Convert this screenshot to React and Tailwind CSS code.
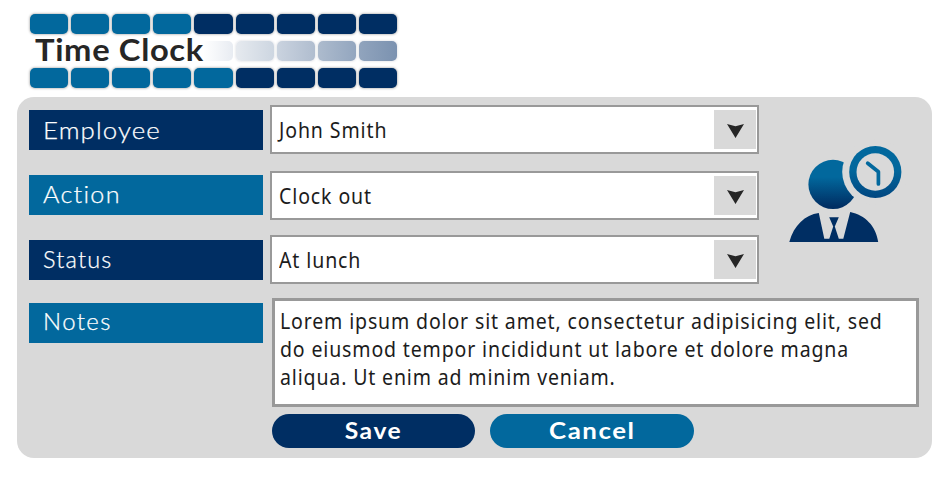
import React from "react";

const TEAL = "bg-[#02689d]";
const NAVY = "bg-[#002e63]";

function TileRow({ tiles }) {
  return (
    <div className="flex h-[20px] gap-[3px]">
      {tiles.map((tone, i) => (
        <div
          key={i}
          className={`h-[20px] w-[38.2px] rounded-[5px] shadow-[0_0_2px_1px_rgba(60,60,60,0.28)] ${tone}`}
        />
      ))}
    </div>
  );
}

function FadeTile({ tone }) {
  return <div className={`h-[20px] w-[38.2px] rounded-[5px] bg-linear-to-r shadow-[0_0_2px_1px_rgba(120,130,150,0.15)] ${tone}`} />;
}

function Header() {
  return (
    <header className="flex w-[368px] flex-col gap-[7px]">
      <TileRow tiles={[TEAL, TEAL, TEAL, TEAL, NAVY, NAVY, NAVY, NAVY, NAVY]} />
      <div className="flex h-[20px] items-center">
        <h1 className="w-[173px] pl-[5px] font-['Lato'] text-[30px] leading-[20px] font-bold whitespace-nowrap text-[#262626]">
          <span className="inline-block origin-left -translate-y-[2px] scale-x-[1.09] tracking-[0.6px]">Time Clock</span>
        </h1>
        <div className="h-[20px] w-[30px] rounded-r-[5px] bg-linear-to-r from-white to-[#e8ecf2]" />
        <div className="ml-[3px] flex gap-[3px]">
          <FadeTile tone="from-[#e6eaef] to-[#cdd6e1]" />
          <FadeTile tone="from-[#cad3df] to-[#b0bdcf]" />
          <FadeTile tone="from-[#adbbcd] to-[#93a6bf]" />
          <FadeTile tone="from-[#91a4bd] to-[#7b92b0]" />
        </div>
      </div>
      <TileRow tiles={[TEAL, TEAL, TEAL, TEAL, TEAL, NAVY, NAVY, NAVY, NAVY]} />
    </header>
  );
}

function Label({ children, tone, text, line }) {
  return (
    <div className={`h-[40px] w-[234px] pl-[14px] font-['Lato'] text-[23.5px] font-light text-white [-webkit-text-stroke:0.25px_white] ${line} ${tone}`}>
      <span className={`inline-block origin-left ${text}`}>{children}</span>
    </div>
  );
}

function Select({ value }) {
  return (
    <div className="flex h-[49px] w-[489px] items-center justify-between border-[2.5px] border-[#999] bg-white pl-[7px] pr-px">
      <span className="inline-block origin-left scale-x-[0.93] font-['Noto_Sans'] text-[21px] leading-[40px] tracking-[0.95px] text-[#1c1c1c]">{value}</span>
      <div className="flex h-[39px] w-[42px] items-center justify-center bg-[#d9d9d9]">
        <svg width="17" height="14" viewBox="0 0 17 14" className="ml-px mt-[3px]">
          <path d="M0 0 L8.5 2.3 L17 0 L8.5 14 Z" fill="#262626" />
        </svg>
      </div>
    </div>
  );
}

function EmployeeIcon() {
  return (
    <svg width="130" height="120" viewBox="0 0 130 120" className="block">
      <defs>
        <linearGradient id="head" x1="0" y1="0" x2="0" y2="1">
          <stop offset="0.35" stopColor="#02689d" />
          <stop offset="0.95" stopColor="#002e63" />
        </linearGradient>
        <linearGradient id="ring" x1="0" y1="0" x2="0" y2="1">
          <stop offset="0.45" stopColor="#02689d" />
          <stop offset="1" stopColor="#014680" />
        </linearGradient>
      </defs>
      <circle cx="53" cy="49.4" r="24.6" fill="url(#head)" />
      <circle cx="95" cy="37" r="32.8" fill="#d9d9d9" />
      <circle cx="95.3" cy="37" r="26.1" fill="url(#ring)" />
      <circle cx="95.3" cy="37" r="18.8" fill="#d9d9d9" />
      <path d="M87.7 28.2 L98.4 36.7 V49" fill="none" stroke="#02689d" strokeWidth="3.7" strokeLinecap="round" strokeLinejoin="round" />
      <path
        d="M9.3 107 C14 90 25 80 38.8 78 L44.3 103.7 H49.3 L53.2 91.5 L49.2 82.3 H58.8 L54.8 91.5 L58.8 103.7 H63.3 L70.2 77 C85 80 96 91 98.2 107 Z"
        fill="#002e63"
      />
    </svg>
  );
}

function Row({ label, tone, text, line, value, height, labelTop }) {
  return (
    <div className={`flex gap-[7px] ${height}`}>
      <div className={labelTop}>
        <Label tone={tone} text={text} line={line}>{label}</Label>
      </div>
      <Select value={value} />
    </div>
  );
}

export default function App() {
  return (
    <div className="h-[480px] w-[952px] overflow-hidden bg-white pt-[13.5px]">
      <div className="h-[83.5px] pl-[29.7px]">
        <Header />
      </div>
      <main className="ml-[17px] h-[361px] w-[915px] rounded-[17px] bg-[#d9d9d9] pt-[8px] pl-[12px]">
        <div className="flex">
          <div className="w-[751px]">
            <Row label="Employee" tone={NAVY} text="tracking-[1px] scale-x-[1.1]" line="leading-[41px]" value="John Smith" height="h-[66px]" labelTop="pt-[5px]" />
            <Row label="Action" tone={TEAL} text="tracking-[1.2px] scale-x-[1.07]" line="leading-[39px]" value="Clock out" height="h-[64px]" labelTop="pt-[4.4px]" />
            <Row label="Status" tone={NAVY} text="tracking-[1.2px]" line="leading-[39px]" value="At lunch" height="h-[63px]" labelTop="pt-[4.5px]" />
          </div>
          <div className="pt-[30px]">
            <EmployeeIcon />
          </div>
        </div>
        <div className="flex gap-[9px]">
          <div className="pt-[5px]">
            <Label tone={TEAL} text="tracking-[1.4px] scale-x-[1.02]" line="leading-[37px]">Notes</Label>
          </div>
          <div className="h-[109px] w-[647px] border-[3px] border-[#999] bg-white pt-[6px] pl-[5px] font-['Noto_Sans'] text-[21px] leading-[28.2px] whitespace-nowrap text-[#1c1c1c]">
            <div className="origin-left scale-x-[0.93] tracking-[0.91px]">Lorem ipsum dolor sit amet, consectetur adipisicing elit, sed</div>
            <div className="origin-left scale-x-[0.93] tracking-[0.91px]">do eiusmod tempor incididunt ut labore et dolore magna</div>
            <div className="origin-left scale-x-[0.93] tracking-[0.91px]">aliqua. Ut enim ad minim veniam.</div>
          </div>
        </div>
        <div className="flex gap-[15px] pt-[7px] pl-[243px] font-['Lato'] text-[23.5px] leading-[31px] font-bold text-white">
          <button className={`h-[34px] w-[203.3px] rounded-full pb-[2px] ${NAVY}`}>
            <span className="inline-block scale-x-[1.05] tracking-[1.5px]">Save</span>
          </button>
          <button className={`h-[34px] w-[203.3px] rounded-full pb-[2px] ${TEAL}`}>
            <span className="inline-block scale-x-[1.1] tracking-[1.4px]">Cancel</span>
          </button>
        </div>
      </main>
    </div>
  );
}
